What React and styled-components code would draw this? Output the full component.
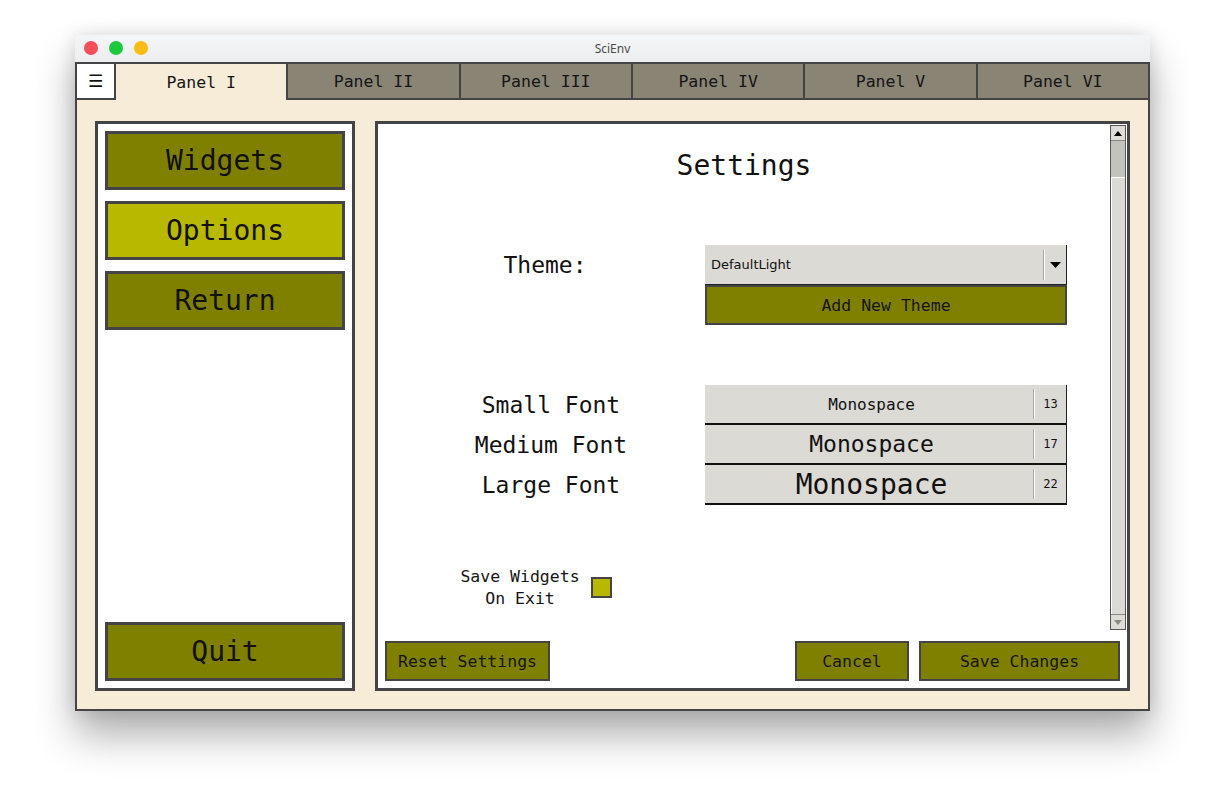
import React from 'react';
import styled, { createGlobalStyle } from 'styled-components';

const GlobalStyle = createGlobalStyle`
    html, body {
        margin: 0;
        padding: 0;
        background: #ffffff;
    }
    body {
        font-family: "DejaVu Sans Mono", "Liberation Mono", monospace;
        color: #111;
    }
`

const BEIGE = '#f6ecd7';
const OLIVE = '#808000';
const OLIVE_LIGHT = '#b8b800';
const DARK = '#444444';
const GREY = '#dcdad5';

const tabs = ['Panel I', 'Panel II', 'Panel III', 'Panel IV', 'Panel V', 'Panel VI'];
const sideItems = [
    { label: 'Widgets', active: false },
    { label: 'Options', active: true },
    { label: 'Return', active: false },
];
const fonts = [
    { label: 'Small Font', size: 16, value: 13 },
    { label: 'Medium Font', size: 23, value: 17 },
    { label: 'Large Font', size: 28, value: 22 },
];

export default function App() {
    return (
        <Page>
            <GlobalStyle />
            <Window>
                <TitleBar>
                    <Lights>
                        <Light color="#f5505a" />
                        <Light color="#1bc93f" />
                        <Light color="#fcbc15" />
                    </Lights>
                    <Title>SciEnv</Title>
                </TitleBar>
                <Frame>
                    <TabRow>
                        <MenuButton>☰</MenuButton>
                        {tabs.map((t, i) => (
                            <Tab key={t} active={i === 0}>{t}</Tab>
                        ))}
                    </TabRow>
                    <Content>
                        <SidePanel>
                            {sideItems.map(item => (
                                <SideButton key={item.label} active={item.active}>{item.label}</SideButton>
                            ))}
                            <Spacer />
                            <SideButton>Quit</SideButton>
                        </SidePanel>
                        <MainPanel>
                            <Body>
                                <Scroll>
                                    <Heading>Settings</Heading>
                                    <Form>
                                        <Label shift={7}>Theme:</Label>
                                        <Stack>
                                            <Dropdown>
                                                <DropValue>DefaultLight</DropValue>
                                                <DropArrow>
                                                    <svg width="11" height="6" viewBox="0 0 11 6">
                                                        <path d="M0 0 L11 0 L5.5 6 Z" fill="#000" />
                                                    </svg>
                                                </DropArrow>
                                            </Dropdown>
                                            <WideButton>Add New Theme</WideButton>
                                        </Stack>
                                    </Form>
                                    <FontForm>
                                        <FontLabels>
                                            {fonts.map(f => (
                                                <FontLabel key={f.label}>{f.label}</FontLabel>
                                            ))}
                                        </FontLabels>
                                        <Stack>
                                            {fonts.map(f => (
                                                <FontRow key={f.label}>
                                                    <FontName size={f.size}>Monospace</FontName>
                                                    <FontSize>{f.value}</FontSize>
                                                </FontRow>
                                            ))}
                                        </Stack>
                                    </FontForm>
                                    <SaveRow>
                                        <SaveText>Save Widgets<br />On Exit</SaveText>
                                        <Check />
                                    </SaveRow>
                                </Scroll>
                                <ScrollBar>
                                    <ScrollStep>
                                        <svg width="8" height="5" viewBox="0 0 8 5">
                                            <path d="M0 5 L8 5 L4 0 Z" fill="#000" />
                                        </svg>
                                    </ScrollStep>
                                    <Thumb />
                                    <Trough />
                                    <ScrollStep>
                                        <svg width="8" height="5" viewBox="0 0 8 5">
                                            <path d="M0 0 L8 0 L4 5 Z" fill="#888" />
                                        </svg>
                                    </ScrollStep>
                                </ScrollBar>
                            </Body>
                            <Footer>
                                <ActionButton width={165}>Reset Settings</ActionButton>
                                <Spacer />
                                <ActionButton width={114}>Cancel</ActionButton>
                                <ActionButton width={201}>Save Changes</ActionButton>
                            </Footer>
                        </MainPanel>
                    </Content>
                </Frame>
            </Window>
        </Page>
    )
}

const Page = styled.div`
    min-height: 796px;
    padding: 35px 0 0 75px;
    box-sizing: border-box;
    background: #fff;
`

const Window = styled.div`
    width: 1075px;
    box-shadow: 0 24px 40px rgba(0, 0, 0, 0.32), 0 0 18px rgba(0, 0, 0, 0.12);
    border-radius: 5px 5px 0 0;
`

const TitleBar = styled.div`
    position: relative;
    height: 27px;
    display: flex;
    align-items: center;
    justify-content: center;
    background: linear-gradient(#f4f5f6, #eceef0);
    border-radius: 5px 5px 0 0;
`

const Lights = styled.div`
    position: absolute;
    left: 9px;
    top: 6px;
    display: flex;
    gap: 11px;
`

const Light = styled.span`
    width: 14px;
    height: 14px;
    border-radius: 50%;
    background: ${p => p.color};
`

const Title = styled.span`
    font-family: "Noto Sans", "DejaVu Sans", sans-serif;
    font-size: 12px;
    color: #4a4a4a;
`

const Frame = styled.div`
    border: 2px solid ${DARK};
    background: ${BEIGE};
`

const TabRow = styled.div`
    display: flex;
    height: 36px;
`

const MenuButton = styled.div`
    width: 37px;
    display: flex;
    align-items: center;
    justify-content: center;
    background: #fff;
    border-right: 2px solid ${DARK};
    border-bottom: 2px solid ${DARK};
    font-family: "DejaVu Sans", sans-serif;
    font-size: 17px;
    color: #111;
`

const Tab = styled.div`
    flex: 1;
    display: flex;
    align-items: center;
    justify-content: center;
    font-size: 16.5px;
    color: #151515;
    background: ${p => p.active ? BEIGE : '#8a8475'};
    border-left: ${p => p.active ? 'none' : `2px solid ${DARK}`};
    border-bottom: ${p => p.active ? 'none' : `2px solid ${DARK}`};
`

const Content = styled.div`
    display: flex;
    gap: 20px;
    padding: 21px 18px 18px;
`

const SidePanel = styled.div`
    width: 240px;
    height: 550px;
    border: 3px solid ${DARK};
    background: #fff;
    padding: 7px;
    display: flex;
    flex-direction: column;
    gap: 11px;
`

const SideButton = styled.div`
    height: 53px;
    border: 3px solid ${DARK};
    background: ${p => p.active ? OLIVE_LIGHT : OLIVE};
    display: flex;
    align-items: center;
    justify-content: center;
    font-size: 28px;
    color: #111;
`

const Spacer = styled.div`
    flex: 1;
`

const MainPanel = styled.div`
    width: 749px;
    height: 564px;
    border: 3px solid ${DARK};
    background: #fff;
    display: flex;
    flex-direction: column;
`

const Body = styled.div`
    flex: 1;
    display: flex;
    padding: 1px 1px 0 0;
`

const Scroll = styled.div`
    flex: 1;
    display: flex;
    flex-direction: column;
`

const Heading = styled.div`
    margin-top: 24px;
    height: 34px;
    line-height: 34px;
    text-align: center;
    font-size: 28px;
    color: #111;
`

const Form = styled.div`
    margin-top: 62px;
    display: grid;
    grid-template-columns: 327px 362px;
`

const Label = styled.div`
    height: 40px;
    display: flex;
    align-items: center;
    justify-content: center;
    padding-left: ${p => p.shift}px;
    font-size: 23px;
    color: #111;
`

const Stack = styled.div`
    display: flex;
    flex-direction: column;
`

const Dropdown = styled.div`
    height: 39px;
    display: flex;
    align-items: center;
    background: ${GREY};
    border-right: 1px solid #222;
    border-bottom: 1px solid #222;
`

const DropValue = styled.span`
    flex: 1;
    padding-left: 6px;
    font-family: "DejaVu Sans", sans-serif;
    font-size: 13px;
    color: #111;
`

const DropArrow = styled.span`
    width: 21px;
    height: 30px;
    display: flex;
    align-items: center;
    justify-content: center;
    border-left: 1px solid #fff;
    box-shadow: -1px 0 0 #a9a7a2;
`

const WideButton = styled.div`
    height: 36px;
    border: 2px solid ${DARK};
    background: ${OLIVE};
    display: flex;
    align-items: center;
    justify-content: center;
    font-size: 16.5px;
    color: #151515;
`

const FontForm = styled(Form)`
    margin-top: 60px;
`

const FontLabels = styled.div`
    display: flex;
    flex-direction: column;
    padding-left: 19px;
`

const FontLabel = styled.div`
    height: 40px;
    display: flex;
    align-items: center;
    justify-content: center;
    font-size: 23px;
    color: #111;
`

const FontRow = styled.div`
    height: 38px;
    display: flex;
    align-items: center;
    background: ${GREY};
    border-right: 1px solid #222;
    border-bottom: 2px solid #111;
`

const FontName = styled.span`
    flex: 1;
    text-align: center;
    padding-left: 4px;
    font-size: ${p => p.size}px;
    color: #111;
`

const FontSize = styled.span`
    width: 31px;
    height: 30px;
    display: flex;
    align-items: center;
    justify-content: center;
    border-left: 1px solid #fff;
    box-shadow: -1px 0 0 #a9a7a2;
    font-size: 12px;
    color: #111;
`

const SaveRow = styled.div`
    margin-top: 61px;
    width: 327px;
    display: flex;
    align-items: flex-start;
    justify-content: center;
    gap: 11px;
    padding-right: 11px;
    box-sizing: border-box;
`

const SaveText = styled.div`
    text-align: center;
    font-size: 16.5px;
    line-height: 22px;
    color: #151515;
`

const Check = styled.div`
    margin-top: 11px;
    width: 17px;
    height: 17px;
    border: 2px solid ${DARK};
    background: ${OLIVE_LIGHT};
`

const ScrollBar = styled.div`
    width: 14px;
    height: 503px;
    border: 1px solid #555;
    background: ${GREY};
    display: flex;
    flex-direction: column;
`

const ScrollStep = styled.div`
    height: 14px;
    display: flex;
    align-items: center;
    justify-content: center;
    background: #dedcd7;
    border-bottom: 1px solid #888;
    &:last-child {
        border-bottom: none;
        border-top: 1px solid #888;
    }
`

const Thumb = styled.div`
    height: 36px;
    background: #c3c3be;
    border-bottom: 1px solid #fff;
`

const Trough = styled.div`
    flex: 1;
    border-left: 1px solid #fff;
`

const Footer = styled.div`
    display: flex;
    gap: 10px;
    padding: 10px 7px 7px;
`

const ActionButton = styled.div`
    width: ${p => p.width - 4}px;
    height: 36px;
    border: 2px solid ${DARK};
    background: ${OLIVE};
    display: flex;
    align-items: center;
    justify-content: center;
    font-size: 16.5px;
    color: #151515;
`
